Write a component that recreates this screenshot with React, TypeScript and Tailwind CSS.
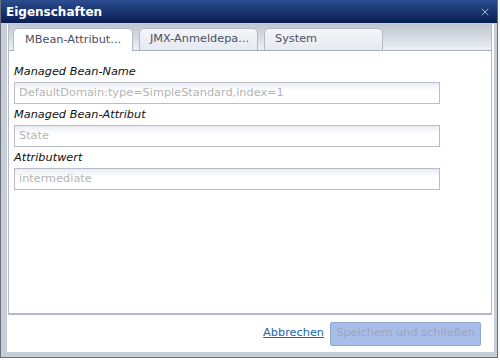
import { X } from "lucide-react";

const fields = [
  { label: "Managed Bean-Name", value: "DefaultDomain:type=SimpleStandard,index=1" },
  { label: "Managed Bean-Attribut", value: "State" },
  { label: "Attributwert", value: "intermediate" },
];

const tabs = ["MBean-Attribut...", "JMX-Anmeldepa...", "System"];

function App() {
  return (
    <div className="h-[360px] w-[500px] bg-white font-['DejaVu_Sans',sans-serif]">
      <div className="flex h-[358px] w-[498px] flex-col border-r border-b border-l border-[#6b6f78] bg-[#c7ceda]">
        <div className="flex h-[23px] items-center justify-between bg-gradient-to-b from-[#2b4d90] to-[#0a1d52] pr-[6px] pl-[5px]">
          <span className="text-[12px] font-bold text-white">Eigenschaften</span>
          <X className="size-[12px] text-[#d8deea]" strokeWidth={1.5} />
        </div>
        <div className="flex flex-1 flex-col pt-[1px] pr-[3px] pb-[5px] pl-[6px]">
          <div className="flex flex-1 flex-col bg-white pr-[2px] pl-[1px]">
            <div className="flex flex-1 flex-col border-r border-b-2 border-l border-[#b4bbc8]">
              <div className="flex h-[27px] items-end gap-[6px] border-b border-[#a9b1c1] bg-gradient-to-b from-[#bfc5d0] to-[#eef0f4] pl-[4px]">
                {tabs.map((t, i) => (
                  <div
                    key={t}
                    className={
                      i === 0
                        ? "-mb-px flex h-[23px] w-[120px] items-center rounded-t-[5px] border border-b-0 border-[#b2b9c7] bg-white pl-[11px] text-[11.3px] text-[#4b5060]"
                        : "flex h-[22px] w-[119px] items-center rounded-t-[5px] border border-b-0 border-[#b2b9c7] bg-gradient-to-b from-[#f3f5f9] to-[#e6e9f0] pl-[10px] text-[11.3px] text-[#4b5060]"
                    }
                  >
                    {t}
                  </div>
                ))}
              </div>
              <div className="flex flex-col px-[5px] pt-[14px]">
                {fields.map((f) => (
                  <div key={f.label} className="flex flex-col">
                    <span className="h-[17px] text-[11.3px] leading-[14px] text-[#111] italic">{f.label}</span>
                    <div className="mb-[4px] flex h-[22px] w-[426px] items-center border border-[#b9bdcb] bg-gradient-to-b from-[#e9edf3] via-white via-40% to-white pl-[4px] text-[11.3px] text-[#b4b4b4]">
                      {f.value}
                    </div>
                  </div>
                ))}
              </div>
            </div>
            <div className="flex h-[37px] items-center justify-end gap-[6px] pr-[11px]">
              <a className="text-[11.3px] text-[#2463b0] underline">Abbrechen</a>
              <button className="h-[24px] w-[151px] rounded-[2px] border border-[#93a5cc] bg-[#a9bde9] text-[11.3px] text-[#97a3bf]">
                Speichern und schließen
              </button>
            </div>
          </div>
        </div>
      </div>
    </div>
  );
}

export default App;
